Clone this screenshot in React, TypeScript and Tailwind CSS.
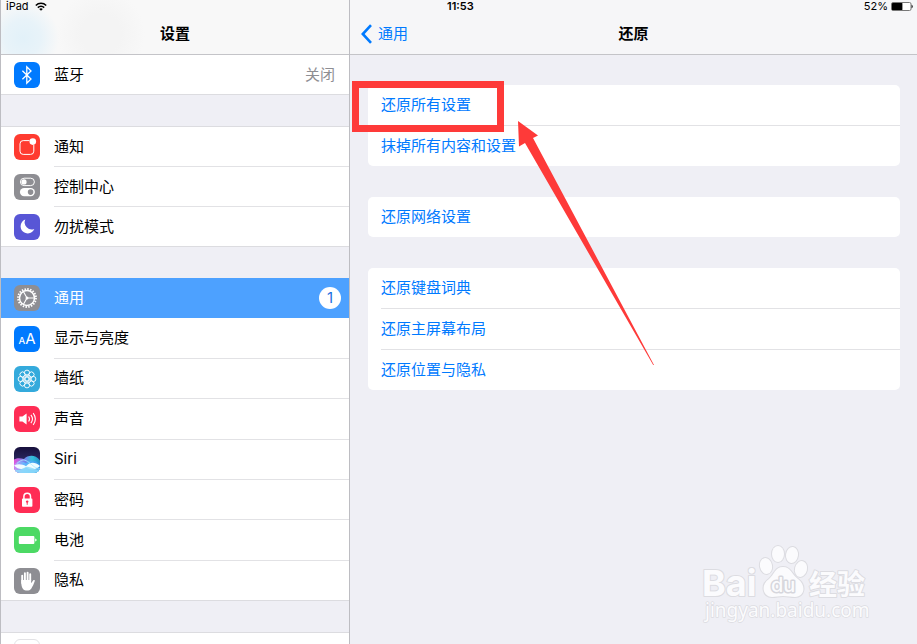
import { Fragment } from 'react';
import type { ReactNode } from 'react';
import clsx from 'clsx';

// Settings — split view: category sidebar + reset page

// ═══════════════════════════════════════════════════════════
// Icons (26 × 26 grid)
// ═══════════════════════════════════════════════════════════

function Tile({ className, children }: { className: string; children: ReactNode }) {
  return (
    <span className={clsx('block size-[26px] shrink-0 overflow-hidden rounded-md', className)}>
      <svg viewBox="0 0 26 26" className="block size-full" fill="none" aria-hidden="true">{children}</svg>
    </span>
  );
}

const BluetoothIcon = () => (
  <Tile className="bg-[#007aff]">
    <path d="M8.4 8.8l8.6 8.2-4.2 4.2V4.8L17 9l-8.600 8.200" stroke="#fff" strokeWidth="1.3" />
  </Tile>
);

const NotificationIcon = () => (
  <Tile className="bg-[#ff3b30]">
    <path d="M15.5 6.6H9.2a3.2 3.2 0 0 0-3.2 3.2v7.4a3.2 3.2 0 0 0 3.2 3.2h7.4a3.2 3.2 0 0 0 3.2-3.2v-6.4" stroke="#fff" strokeWidth="1" />
    <circle cx="18.8" cy="7.6" r="3.3" fill="#fff" />
  </Tile>
);

const ControlIcon = () => (
  <Tile className="bg-[#8e8e93]">
    <rect x="6.4" y="4.2" width="14" height="7.4" rx="3.7" stroke="#fff" strokeWidth="1" />
    <circle cx="10" cy="7.9" r="2.6" fill="#fff" />
    <rect x="5.9" y="13.9" width="15" height="8.4" rx="4.2" fill="#fff" />
    <circle cx="16.6" cy="18.1" r="2.8" fill="#8e8e93" />
  </Tile>
);

const MoonIcon = () => (
  <Tile className="bg-[#5856d6]">
    <path d="M11.3 5.6a7.1 7.1 0 1 0 9 9.3 7 7 0 0 1-9-9.3z" fill="#fff" />
  </Tile>
);

const GearIcon = () => (
  <Tile className="bg-[#8e8e93]">
    <circle cx="13" cy="13" r="9" stroke="#fff" strokeWidth="1.8" strokeDasharray="1.5 1.327" />
    <circle cx="13" cy="13" r="7.5" stroke="#fff" strokeWidth="1.5" />
    <path d="M13 13h7M13 13l-3.500-6.200M13 13l-3.500 6.200" stroke="#fff" strokeWidth="1.1" />
    <circle cx="13" cy="13" r="1.5" fill="#fff" />
  </Tile>
);

const DisplayIcon = () => (
  <Tile className="bg-[#007aff]">
    <text x="4.600" y="17.600" fontSize="9.500" fill="#fff" className="font-medium">A</text>
    <text x="11.300" y="17.600" fontSize="15" fill="#fff">A</text>
  </Tile>
);

const PETALS = [0, 45, 90, 135, 180, 225, 270, 315];

const WallpaperIcon = () => (
  <Tile className="bg-[#34aadc]">
    <g stroke="#fff" strokeWidth="0.9">
      {PETALS.map((deg) => (
        <g key={deg} transform={`rotate(${deg} 13 13)`}>
          <circle cx="13" cy="6.700" r="2.600" />
          <circle cx="13" cy="9.700" r="1.100" strokeWidth="0.7" />
        </g>
      ))}
      <circle cx="13" cy="13" r="2" />
    </g>
  </Tile>
);

const SoundIcon = () => (
  <Tile className="bg-[#ff2d55]">
    <path d="M5.400 10.400h3L12.600 7.600v11l-4.200-3.200h-3z" fill="#fff" />
    <path d="M14.600 10.500a4.200 4.200 0 0 1 0 5M16.900 8.800a7 7 0 0 1 0 8.400M19.200 7.100a10 10 0 0 1 0 11.800" stroke="#fff" strokeWidth="1.1" />
  </Tile>
);

const SiriIcon = () => (
  <Tile className="bg-linear-to-b from-[#17103c] via-[#29265f] to-[#3c74c0]">
    <defs>
      <linearGradient id="siri-back" x1="0" x2="1">
        <stop offset="0" stopColor="#e255dc" />
        <stop offset="0.45" stopColor="#6f86ee" />
        <stop offset="0.7" stopColor="#33bfd8" />
        <stop offset="1" stopColor="#258fc8" />
      </linearGradient>
      <linearGradient id="siri-front" x1="0" x2="1">
        <stop offset="0" stopColor="#d08cf8" />
        <stop offset="0.4" stopColor="#5cc0ff" />
        <stop offset="1" stopColor="#3b93ea" />
      </linearGradient>
    </defs>
    <path d="M0 12.500c4-2 7-1 10-.5 4-4 11-5 16 1.500V26H0z" fill="url(#siri-back)" />
    <path d="M0 17.500c5-5 8-4 12-1 4-4 9-4 14 1V26H0z" fill="url(#siri-front)" opacity="0.85" />
    <path d="M0 18.500c4-2 8-1.500 12 .7 4-4.500 9-4.500 14-.2-4 4-9 4.500-14 1.500-4 2.500-8 2-12-2z" fill="#effcff" />
    <path d="M0 22.500c6 1.500 8-1 12-2.500s9 4 14 2V26H0z" fill="#8fdcfa" opacity="0.85" />
    <path d="M3 16.500c5-5 8-4 12-1s6 6 11 6" stroke="#a8ecff" strokeWidth="0.8" />
  </Tile>
);

const LockIcon = () => (
  <Tile className="bg-[#ff2d55]">
    <path d="M9.900 12.400V9.600a3.300 3.300 0 0 1 6.600 0v2.800" stroke="#fff" strokeWidth="1.5" />
    <rect x="8" y="11.600" width="10.400" height="8.200" rx="0.8" fill="#fff" />
    <circle cx="13.200" cy="14.600" r="1.200" fill="#ff2d55" />
    <path d="M13.200 14.800v3" stroke="#ff2d55" strokeWidth="1" />
  </Tile>
);

const BatteryIcon = () => (
  <Tile className="bg-[#4cd964]">
    <rect x="4.800" y="9" width="15.600" height="8" rx="1" fill="#fff" />
    <path d="M21.200 11.400c1.900.4 1.900 2.800 0 3.200z" fill="#fff" />
  </Tile>
);

const HandIcon = () => (
  <Tile className="bg-[#8e8e93]">
    <path d="M8.200 15V7.600M10.900 13V5.200M13.600 13V4.600M16.200 13V6.200" stroke="#fff" strokeWidth="1.9" strokeLinecap="round" />
    <path d="M7.300 12h9.800v3.200l2-2.600c.7-.9 2-.5 1.700.5-.9 2.600-2 5.200-3.600 7.600-1.800 2.600-6.400 2.400-8.200.2-1.300-1.700-1.700-4-1.700-6.500z" fill="#fff" />
  </Tile>
);

// ═══════════════════════════════════════════════════════════
// Data
// ═══════════════════════════════════════════════════════════

interface Entry {
  label: string;
  icon: ReactNode;
  badge?: number;
  active?: boolean;
}

const ALERTS: Entry[] = [
  { label: '通知', icon: <NotificationIcon /> },
  { label: '控制中心', icon: <ControlIcon /> },
  { label: '勿扰模式', icon: <MoonIcon /> },
];

const DEVICE: Entry[] = [
  { label: '通用', icon: <GearIcon />, badge: 1, active: true },
  { label: '显示与亮度', icon: <DisplayIcon /> },
  { label: '墙纸', icon: <WallpaperIcon /> },
  { label: '声音', icon: <SoundIcon /> },
  { label: 'Siri', icon: <SiriIcon /> },
  { label: '密码', icon: <LockIcon /> },
  { label: '电池', icon: <BatteryIcon /> },
  { label: '隐私', icon: <HandIcon /> },
];

const RESET_GROUPS: string[][] = [
  ['还原所有设置', '抹掉所有内容和设置'],
  ['还原网络设置'],
  ['还原键盘词典', '还原主屏幕布局', '还原位置与隐私'],
];

// ═══════════════════════════════════════════════════════════
// Sidebar
// ═══════════════════════════════════════════════════════════

function SidebarRow({ entry, last, grow }: { entry: Entry; last: boolean; grow?: boolean }) {
  return (
    <li className={clsx('flex', grow ? 'flex-1' : 'h-10', entry.active && 'bg-[#4da1ff] text-white')}>
      <button type="button" className="flex min-w-0 flex-1 items-stretch pl-[13px] text-left">
        <span className="flex w-10 shrink-0 items-center">{entry.icon}</span>
        <span className={clsx('flex flex-1 items-center justify-between border-b', last || entry.active ? 'border-transparent' : 'border-[#e2e2e5]')}>
          <span>{entry.label}</span>
          {entry.badge && (
            <span className="mr-2 flex size-[22px] items-center justify-center rounded-full bg-white text-[#1f6fe0]">{entry.badge}</span>
          )}
        </span>
      </button>
    </li>
  );
}

function Sidebar() {
  return (
    <aside className="flex w-[350px] shrink-0 flex-col border-x border-[#bdbdc2] bg-[#efeff5]">
      <header className="flex h-[55px] shrink-0 flex-col border-b border-[#c4c4c8] bg-[#f8f8f8] bg-[radial-gradient(circle_at_22px_38px,#e2f1f9_0,#e8f3f9_18px,transparent_36px),radial-gradient(circle_at_100px_34px,#f4f4f4_0,#f4f4f4_20px,transparent_44px)]">
        <div className="flex h-3 items-center gap-1.5 pl-[5px] text-[11px]">
          iPad
          <svg viewBox="0 0 12 9" className="h-[9px] w-3" fill="none" stroke="#000" strokeWidth="1.5" aria-label="Wi-Fi">
            <path d="M.8 3.5a7.4 7.4 0 0 1 10.4 0M2.800 5.600a4.500 4.500 0 0 1 6.400 0" />
            <path d="M6 8.800L4.200 7a2.600 2.600 0 0 1 3.600 0z" fill="#000" stroke="none" />
          </svg>
        </div>
        <h1 className="flex flex-1 items-center justify-center pt-0.5 font-bold">设置</h1>
      </header>

      <ul className="shrink-0 border-b border-[#dcdce0] bg-white">
        <li className="h-[39px]">
          <button type="button" className="flex size-full items-center pl-[13px] pr-[14px] text-left">
            <span className="w-10 shrink-0"><BluetoothIcon /></span>
            <span className="flex-1">蓝牙</span>
            <span className="text-[#8e8e93]">关闭</span>
          </button>
        </li>
      </ul>

      <ul className="mt-[31px] shrink-0 border-t border-[#dcdce0] bg-white shadow-[inset_0_-1px_#dcdce0]">
        {ALERTS.map((entry, i) => <SidebarRow key={entry.label} entry={entry} last={i === ALERTS.length - 1} />)}
      </ul>

      <ul className="my-[31px] flex flex-1 flex-col bg-white shadow-[inset_0_-1px_#dcdce0]">
        {DEVICE.map((entry, i) => <SidebarRow key={entry.label} entry={entry} last={i === DEVICE.length - 1} grow />)}
      </ul>

      {/* next group, cut off by the bottom of the screen */}
      <div className="h-3 shrink-0 overflow-hidden border-t border-[#dcdce0] bg-white pl-[13px] pt-1.5">
        <div className="size-[26px] rounded-md border border-[#e2e2e5]" />
      </div>
    </aside>
  );
}

// ═══════════════════════════════════════════════════════════
// Reset page
// ═══════════════════════════════════════════════════════════

function DetailHeader() {
  return (
    <header className="flex h-[55px] shrink-0 flex-col border-b border-[#c4c4c8] bg-[#f6f6f8]">
      <div className="flex h-3 items-center justify-between pl-[97px] pr-1 text-[11px]">
        <time className="font-semibold">11:53</time>
        <span className="flex items-center gap-[3px]">
          52%
          <svg viewBox="0 0 22 9" className="h-[9px] w-[22px]" aria-hidden="true">
            <rect x="0.5" y="0.5" width="19.500" height="8" rx="1.5" fill="#fff" stroke="#777" />
            <rect x="1" y="1" width="10.400" height="7" rx="0.6" fill="#000" />
            <path d="M20.600 2.800c1.500.5 1.500 2.900 0 3.400z" fill="#000" />
          </svg>
        </span>
      </div>
      <div className="grid flex-1 grid-cols-[1fr_auto_1fr] items-center pt-0.5">
        <button type="button" className="flex items-center gap-1.5 justify-self-start pl-[11px] text-[#007aff]">
          <svg viewBox="0 0 11 20" className="h-5 w-[11px]" fill="none" stroke="currentColor" strokeWidth="2.6" aria-hidden="true">
            <path d="M10 1.200L1.800 10l8.200 8.800" />
          </svg>
          通用
        </button>
        <h2 className="font-bold">还原</h2>
      </div>
    </header>
  );
}

function ResetGroup({ items }: { items: string[] }) {
  return (
    <div className="rounded-[5px] bg-white">
      {items.map((label, i) => (
        <Fragment key={label}>
          {i > 0 && <hr className="ml-[13px] border-[#e2e2e5]" />}
          <button type="button" className="flex h-10 w-full items-center pl-[13px] text-left text-[#007aff]">{label}</button>
        </Fragment>
      ))}
    </div>
  );
}

function Watermark() {
  return (
    <svg viewBox="0 0 170 82" className="absolute right-[46px] bottom-4 h-[82px] w-[170px] overflow-visible" fill="#fbfbfd" stroke="#dcdce1" strokeWidth="2" strokeLinejoin="round" paintOrder="stroke" aria-hidden="true">
      <text x="1" y="50" fontSize="36" className="font-['Inter'] font-bold">Bai</text>
      <ellipse cx="65" cy="20" rx="6" ry="8" transform="rotate(-12 65 20)" />
      <ellipse cx="77" cy="8" rx="6" ry="8" />
      <ellipse cx="91" cy="9" rx="6" ry="8" transform="rotate(8 91 9)" />
      <ellipse cx="100" cy="23" rx="6" ry="8" transform="rotate(14 100 23)" />
      <path d="M82 21c-8 0-9 8-14 12-9 6-6 18 3 18 4 0 7-1 11-1s8 1 12 1c9 0 12-11 3-18-6-4-7-12-15-12z" />
      <text x="70" y="46" fontSize="20" strokeWidth="3" stroke="#d6d6dc" className="font-['Inter'] font-medium">du</text>
      <text x="108" y="49" fontSize="28" className="font-['Noto_Sans_CJK_SC'] font-bold">经验</text>
      <text x="4" y="71" fontSize="19" strokeWidth="1.5" className="font-['Noto_Sans']">jingyan.baidu.com</text>
    </svg>
  );
}

// Red frame and arrow that point out the first option
function Callout() {
  return (
    <>
      <div className="pointer-events-none absolute left-[2px] top-[81px] h-[51px] w-[152px] border-[7px] border-[#fe3a39]" />
      <svg viewBox="0 0 138 246" className="pointer-events-none absolute left-[167px] top-[120px] h-[246px] w-[138px]" fill="#fe3a39" aria-hidden="true">
        <path d="M1 1L21 15.500l-5 2.500L137 245h-.8L8 23l-6 3.500z" />
      </svg>
    </>
  );
}

export default function App() {
  return (
    <div className="flex h-screen overflow-hidden bg-[#efeff5] font-['Inter','Noto_Sans_CJK_SC',sans-serif] text-[15px] leading-5 text-black">
      <Sidebar />
      <main className="relative flex min-w-0 flex-1 flex-col">
        <DetailHeader />
        <div className="flex flex-col gap-[31px] pt-[30px] pr-[17px] pl-[18px]">
          {RESET_GROUPS.map((items) => <ResetGroup key={items[0]} items={items} />)}
        </div>
        <Callout />
        <Watermark />
      </main>
    </div>
  );
}
